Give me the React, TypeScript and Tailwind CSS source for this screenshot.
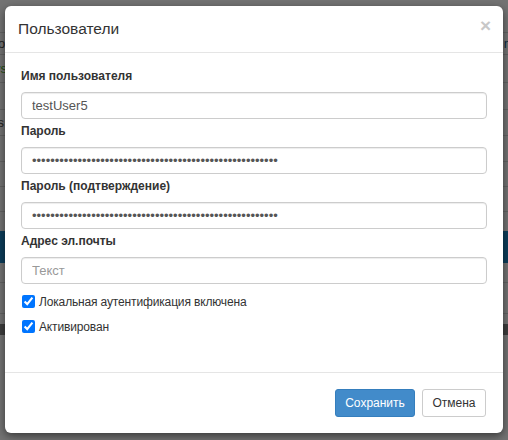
import React, { useState } from 'react';

const font = { fontFamily: '"Liberation Sans", Arial, Helvetica, sans-serif' };

// фон страницы под модальным окном (затемнённый)
const BackgroundPage: React.FC = () => {
  return (
    <div className="flex h-full w-full flex-col bg-[#737373]">
      <div className="h-[33px] border-b border-[#626262]" />
      <div className="flex h-[22px] items-center justify-between border-b border-[#626262] text-[13px] text-[#222]">
        <span className="-ml-[2px]">о</span>
        <span className="-mr-[3px] text-[#0b2a40]">n</span>
      </div>
      <div className="flex h-[28px] items-center border-b border-[#626262] text-[13px] text-[#1d4d12]">
        <span className="-ml-[6px]">ys</span>
      </div>
      <div className="h-[27px] border-b border-[#626262]" />
      <div className="flex h-[26px] items-center border-b border-[#626262] text-[13px] text-[#222]">
        <span className="-ml-[6px]">ıs</span>
      </div>
      <div className="h-[26px] border-b border-[#626262]" />
      <div className="h-[25px] border-b border-[#626262]" />
      <div className="h-[25px] border-b border-[#626262]" />
      <div className="h-[19px]" />
      <div className="h-[32px] bg-[#0c3d5a]" />
      <div className="h-[20px] border-b border-[#626262]" />
      <div className="h-[31px] border-b border-[#626262]" />
      <div className="h-[10px]" />
      <div className="h-[11px] bg-[#3d3d3d]" />
      <div className="flex-1" />
    </div>
  );
};

interface FieldProps {
  label: string;
  type?: string;
  value?: string;
  placeholder?: string;
  onChange?: (v: string) => void;
}

const Field: React.FC<FieldProps> = ({ label, type = 'text', value, placeholder, onChange }) => (
  <div className="mb-[4px]">
    <label className="mb-[7px] block text-[12px] leading-[17px] font-bold text-[#333]">{label}</label>
    <input
      type={type}
      value={value}
      placeholder={placeholder}
      onChange={(e) => onChange && onChange(e.target.value)}
      className="block h-[27px] w-full rounded-[4px] border border-[#ccc] bg-white px-[10px] text-[13px] text-[#555] shadow-[inset_0_1px_1px_rgba(0,0,0,0.075)] outline-none placeholder:text-[#999]"
      style={font}
    />
  </div>
);

export default function App() {
  const [login, setLogin] = useState('testUser5');
  const [password, setPassword] = useState('x'.repeat(54));
  const [confirm, setConfirm] = useState('x'.repeat(54));
  const [email, setEmail] = useState('');
  const [localAuth, setLocalAuth] = useState(true);
  const [active, setActive] = useState(true);

  return (
    <div className="relative h-[440px] w-[508px] overflow-hidden" style={font}>
      <BackgroundPage />

      {/* Модальное окно */}
      <div className="absolute inset-0 px-[5px] pt-[6px]">
        <div className="flex h-[427px] flex-col rounded-[6px] bg-white shadow-[0_3px_9px_rgba(0,0,0,0.5)]">
          {/* Заголовок */}
          <div className="flex h-[47px] items-center justify-between border-b border-[#e5e5e5] pr-[12px] pl-[13px]">
            <h4 className="text-[15.5px] font-normal text-[#333]">Пользователи</h4>
            <button className="-mt-[8px] text-[19px] leading-none font-bold text-[#c8c8c8]">×</button>
          </div>

          {/* Тело */}
          <div className="flex-1 px-[16px] pt-[15px]">
            <Field label="Имя пользователя" value={login} onChange={setLogin} />
            <Field label="Пароль" type="password" value={password} onChange={setPassword} />
            <Field label="Пароль (подтверждение)" type="password" value={confirm} onChange={setConfirm} />
            <Field label="Адрес эл.почты" value={email} placeholder="Текст" onChange={setEmail} />

            <div className="mt-[5px] flex flex-col">
              <label className="flex h-[25px] items-center gap-[4px] text-[12px] tracking-[-0.15px] text-[#333]">
                <input
                  type="checkbox"
                  checked={localAuth}
                  onChange={(e) => setLocalAuth(e.target.checked)}
                  className="m-0 ml-[1px] h-[13px] w-[13px]"
                />
                Локальная аутентификация включена
              </label>
              <label className="flex h-[25px] items-center gap-[4px] text-[12px] tracking-[-0.15px] text-[#333]">
                <input
                  type="checkbox"
                  checked={active}
                  onChange={(e) => setActive(e.target.checked)}
                  className="m-0 ml-[1px] h-[13px] w-[13px]"
                />
                Активирован
              </label>
            </div>
          </div>

          {/* Подвал */}
          <div className="flex justify-end gap-[7px] border-t border-[#e5e5e5] px-[17px] pt-[16px] pb-[16px]">
            <button className="h-[28px] w-[80px] rounded-[3px] border border-[#357ebd] bg-[#428bca] text-[12px] text-white">
              Сохранить
            </button>
            <button className="h-[28px] w-[64px] rounded-[3px] border border-[#ccc] bg-white text-[12px] text-[#333]">
              Отмена
            </button>
          </div>
        </div>
      </div>
    </div>
  );
}
